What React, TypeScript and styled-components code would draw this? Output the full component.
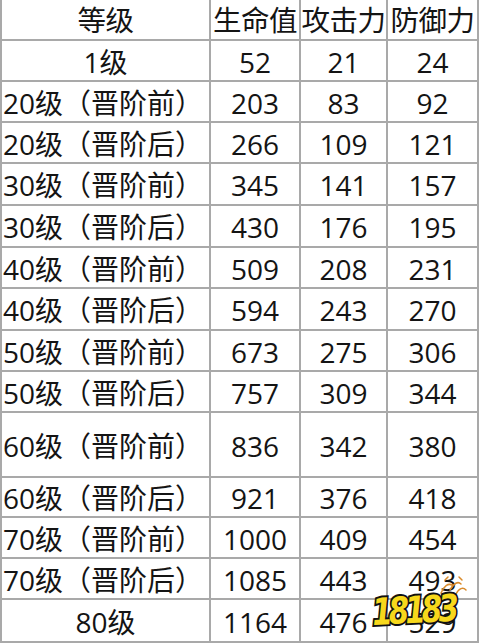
import styled, { createGlobalStyle } from 'styled-components';

const GlobalStyle = createGlobalStyle`
  html, body {
    margin: 0;
    padding: 0;
    background: #ffffff;
  }
  body {
    width: 480px;
    height: 643px;
    overflow: hidden;
    font-family: "Open Sans", "Noto Sans CJK SC", sans-serif;
  }
`;

const Page = styled.div`
  position: relative;
  width: 480px;
  height: 643px;
  background: #ffffff;
`;

const Grid = styled.div`
  display: grid;
  grid-template-columns: 207px 88px 85px 89px;
  grid-template-rows: 39px 39px 39px 39px 40px 40px 39px 40px 39px 39px 63px 38px 39px 39px 41px;
  gap: 2px;
  padding: 0 2px 2px 2px;
  width: 479px;
  box-sizing: border-box;
  background: #a9a9a9;
`;

const Cell = styled.div<{ $align?: 'left' | 'center' }>`
  background: #ffffff;
  display: flex;
  align-items: center;
  justify-content: ${p => (p.$align === 'left' ? 'flex-start' : 'center')};
  padding-left: ${p => (p.$align === 'left' ? '1px' : '0')};
  padding-top: 2px;
  font-family: "Open Sans", "Noto Sans CJK SC", sans-serif;
  font-size: 28px;
  line-height: 1;
  color: #141414;
  white-space: nowrap;
  overflow: hidden;
`;

const HeadCell = styled(Cell)`
  font-size: 28.5px;
  letter-spacing: -0.5px;
`;

const Watermark = styled.div`
  position: absolute;
  left: 372px;
  top: 588px;
  width: 100px;
  height: 52px;
  pointer-events: none;
`;

const LogoText = styled.span`
  position: absolute;
  left: 0;
  top: 6px;
  font-family: "DejaVu Sans", sans-serif;
  font-weight: 900;
  font-style: italic;
  font-size: 37px;
  letter-spacing: -5px;
  color: #f7d81c;
  -webkit-text-stroke: 4px #111;
  paint-order: stroke fill;
  transform: rotate(-3deg) scaleX(0.8);
  transform-origin: left center;
  line-height: 1;
`;

const Scribble = styled.svg`
  position: absolute;
  left: 66px;
  top: -13px;
`;

const levels = [
  ['1级', '52', '21', '24', true],
  ['20级（晋阶前）', '203', '83', '92'],
  ['20级（晋阶后）', '266', '109', '121'],
  ['30级（晋阶前）', '345', '141', '157'],
  ['30级（晋阶后）', '430', '176', '195'],
  ['40级（晋阶前）', '509', '208', '231'],
  ['40级（晋阶后）', '594', '243', '270'],
  ['50级（晋阶前）', '673', '275', '306'],
  ['50级（晋阶后）', '757', '309', '344'],
  ['60级（晋阶前）', '836', '342', '380'],
  ['60级（晋阶后）', '921', '376', '418'],
  ['70级（晋阶前）', '1000', '409', '454'],
  ['70级（晋阶后）', '1085', '443', '493'],
  ['80级', '1164', '476', '529', true],
] as const;

export default function App() {
  return (
    <Page>
      <GlobalStyle />
      <Grid>
        <HeadCell>等级</HeadCell>
        <HeadCell>生命值</HeadCell>
        <HeadCell>攻击力</HeadCell>
        <HeadCell>防御力</HeadCell>
        {levels.map(row => (
          <>
            <Cell key={row[0]} $align={row[4] ? 'center' : 'left'}>{row[0]}</Cell>
            <Cell>{row[1]}</Cell>
            <Cell>{row[2]}</Cell>
            <Cell>{row[3]}</Cell>
          </>
        ))}
      </Grid>
      <Watermark>
        <Scribble width="30" height="24" viewBox="0 0 30 24">
          <path d="M3 18 C6 11 10 8 14 10 M12 15 C16 8 20 6 23 9 M18 19 C21 13 25 12 28 15 M7 5 L10 2 M21 2 L24 5" stroke="#d98a2a" strokeWidth="1.5" fill="none" strokeLinecap="round" />
        </Scribble>
        <LogoText>18183</LogoText>
      </Watermark>
    </Page>
  );
}
